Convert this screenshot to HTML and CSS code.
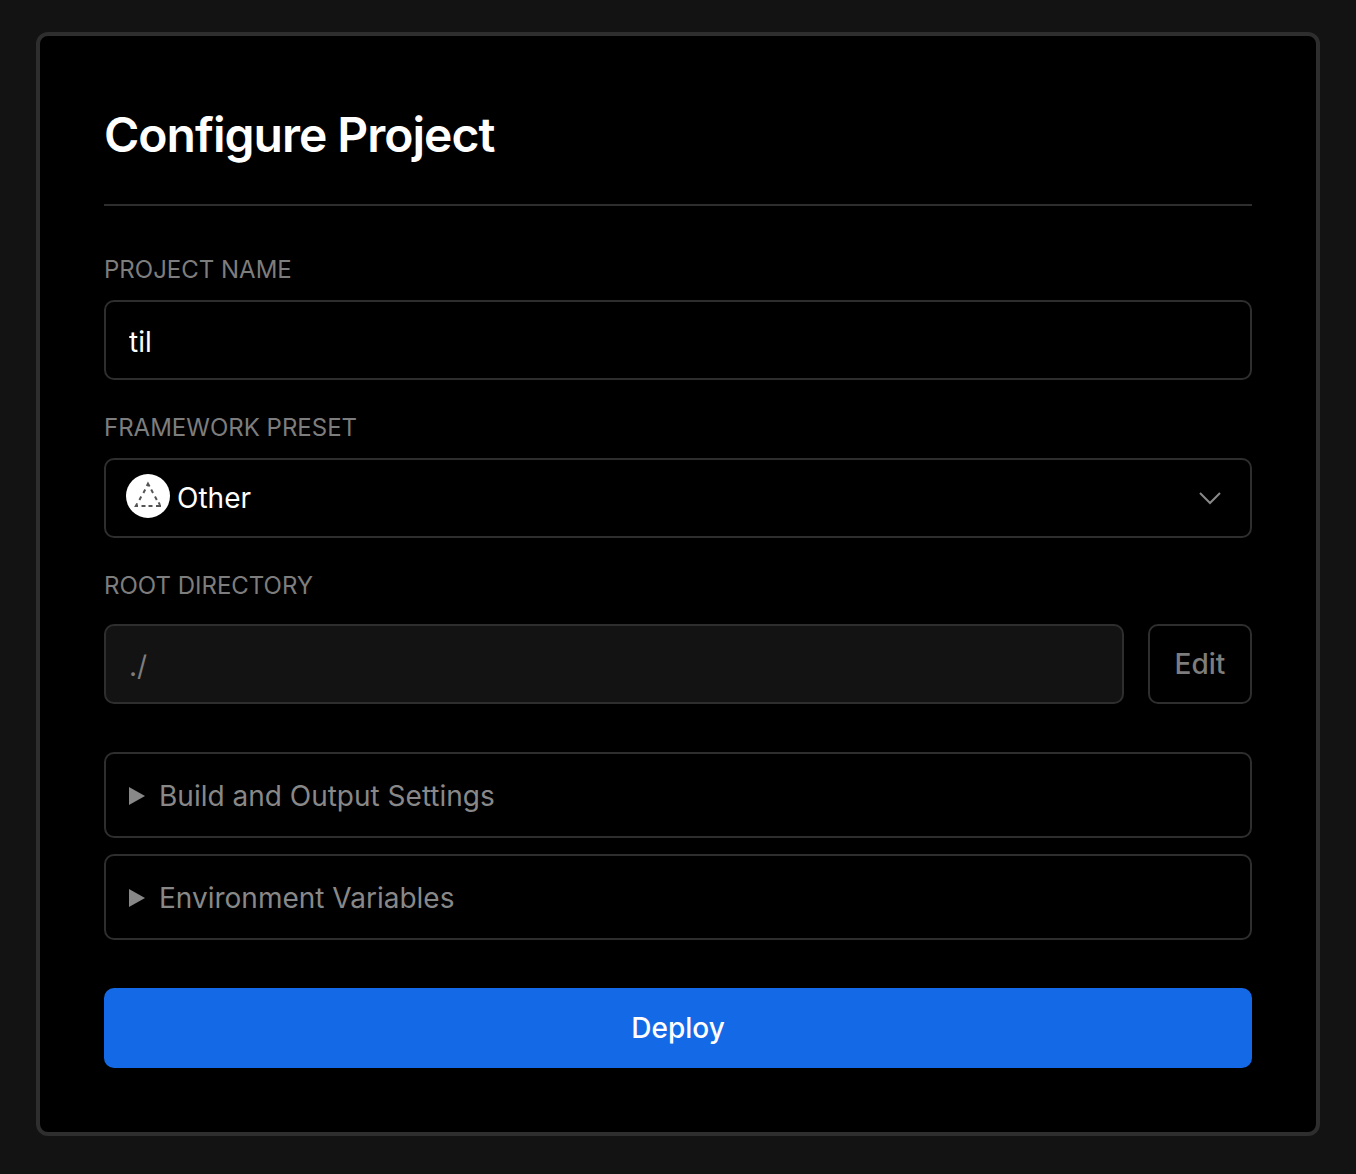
FILE: index.html
```html
<!DOCTYPE html>
<html lang="en">
<head>
<meta charset="utf-8">
<meta name="viewport" content="width=device-width, initial-scale=1">
<title>Configure Project</title>
<link rel="stylesheet" href="styles.css">
</head>
<body>
<main class="card">
  <h1 class="title">Configure Project</h1>
  <form class="form">
    <div class="field">
      <label class="label" for="name">Project Name</label>
      <input class="control" id="name" type="text" value="til">
    </div>
    <div class="field">
      <label class="label" for="preset">Framework Preset</label>
      <div class="select-wrap">
        <svg class="preset-icon" viewBox="0 0 44 44" aria-hidden="true"><circle cx="22" cy="22" r="22" fill="#fff"/><path d="M20.8 12 22 9.6 23.6 12.4M19.2 15.6 17.4 18.9M15.2 22.6 13.4 25.9M11.2 29.4 9.8 32H12M25.2 15.6 27 18.9M29 22.6 30.8 25.9M32.6 28.4 34 31M15.5 32H19.5M22.5 32H26.5M30 32H35" fill="none" stroke="#555" stroke-width="2"/></svg>
        <select class="control select" id="preset"><option>Other</option></select>
        <svg class="chevron" viewBox="0 0 24 24" aria-hidden="true"><path d="m2 7 10 10L22 7" fill="none" stroke="#888" stroke-width="2"/></svg>
      </div>
    </div>
    <div class="field field-root">
      <label class="label" for="root">Root Directory</label>
      <div class="row">
        <input class="control" id="root" type="text" value="./" disabled>
        <button class="edit" type="button">Edit</button>
      </div>
    </div>
    <div class="sections">
      <details class="section"><summary class="summary"><svg class="marker" viewBox="0 0 16 18" aria-hidden="true"><path d="M0 0 16 9 0 18Z" fill="#888"/></svg>Build and Output Settings</summary></details>
      <details class="section"><summary class="summary"><svg class="marker" viewBox="0 0 16 18" aria-hidden="true"><path d="M0 0 16 9 0 18Z" fill="#888"/></svg>Environment Variables</summary></details>
    </div>
    <button class="deploy" type="submit">Deploy</button>
  </form>
</main>
</body>
</html>
```

FILE: styles.css
```css
* { box-sizing: border-box; }
body {
  margin: 0;
  padding: 32px 36px 38px;
  background: #131313;
  color: #fff;
  font-family: Inter, "Liberation Sans", sans-serif;
  font-size: 28px;
  line-height: 40px;
}
.card {
  padding: 64px;
  background: #000;
  border: 4px solid #2e2e2e;
  border-radius: 12px;
}
.title {
  margin: 0 0 48px;
  padding: 3px 0 37px;
  border-bottom: 2px solid #2e2e2e;
  font-size: 48px;
  font-weight: 600;
  line-height: 64px;
  letter-spacing: -1px;
}
.form { display: flex; flex-direction: column; }
.field { display: flex; flex-direction: column; gap: 14px; margin-bottom: 32px; }
.label {
  color: #7d7d7d;
  font-size: 24px;
  line-height: 32px;
  text-transform: uppercase;
}
.control {
  width: 100%;
  height: 80px;
  padding: 4px 23px 0;
  background: #000;
  color: #fff;
  border: 2px solid #2e2e2e;
  border-radius: 10px;
  font: inherit;
}
.control:disabled { background: #131313; color: #7d7d7d; }
.select-wrap { position: relative; }
.select { display: block; appearance: none; padding: 0 71px; }
.preset-icon { position: absolute; left: 22px; top: 16px; width: 44px; height: 44px; }
.chevron { position: absolute; right: 30px; top: 28px; width: 24px; height: 24px; pointer-events: none; }
.field-root { gap: 22px; margin-bottom: 48px; }
.row { display: flex; gap: 24px; }
.edit {
  flex: none;
  min-width: 104px;
  padding: 0 23px;
  background: #000;
  color: #7d7d7d;
  border: 2px solid #2e2e2e;
  border-radius: 10px;
  font: inherit;
  font-weight: 500;
}
.sections { display: flex; flex-direction: column; gap: 16px; margin-bottom: 48px; }
.section { border: 2px solid #2e2e2e; border-radius: 10px; }
.summary {
  display: flex;
  align-items: center;
  gap: 14px;
  padding: 22px 23px 20px;
  color: #888;
  list-style: none;
}
.marker { width: 16px; height: 18px; }
.deploy {
  height: 80px;
  background: #1469e7;
  color: #fff;
  border: 0;
  border-radius: 10px;
  font: inherit;
  font-weight: 500;
}
```
